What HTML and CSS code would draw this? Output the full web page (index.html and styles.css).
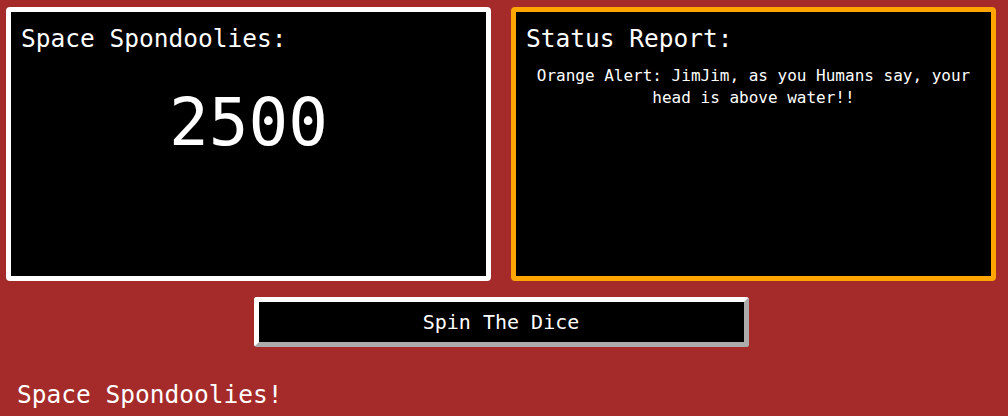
FILE: index.html
```html
<!DOCTYPE html>
<html lang="en">
<head>
<meta charset="utf-8">
<title>Space Spondoolies</title>
<link rel="stylesheet" href="styles.css">
</head>
<body>
<main class="app">
  <section class="cards">
    <div class="card card-score">
      <h2 class="card-title">Space Spondoolies:</h2>
      <div class="score">2500</div>
    </div>
    <div class="card card-status">
      <h2 class="card-title">Status Report:</h2>
      <p class="status-msg">Orange Alert: JimJim, as you Humans say, your head is above water!!</p>
    </div>
  </section>
  <button class="spin-btn" type="button">Spin The Dice</button>
  <footer class="footer">Space Spondoolies!</footer>
</main>
</body>
</html>
```

FILE: styles.css
```css
* { box-sizing: border-box; }

html, body {
  margin: 0;
  padding: 0;
  background: #a52a2a;
}

body {
  font-family: "DejaVu Sans Mono", "Liberation Mono", monospace;
  color: #fff;
}

.app {
  display: flex;
  flex-direction: column;
  padding: 7px 12px 0 6px;
}

.cards {
  display: flex;
  gap: 20px;
}

.card {
  width: 485px;
  height: 274px;
  background: #000;
  border: 5px solid #fff;
  border-radius: 4px;
  padding: 12px 10px 0 10px;
}

.card-status {
  border-color: #ffa500;
}

.card-title {
  margin: 0;
  font-size: 24.5px;
  font-weight: normal;
  line-height: 30px;
}

.score {
  margin-top: 29px;
  font-size: 66px;
  line-height: 80px;
  text-align: center;
}

.status-msg {
  margin: 11px 0 0;
  font-size: 16px;
  line-height: 22px;
  text-align: center;
}

.spin-btn {
  align-self: center;
  margin-top: 16px;
  width: 495px;
  height: 50px;
  background: #000;
  color: #fff;
  border: 5px outset #fff;
  border-radius: 3px;
  font-family: "DejaVu Sans Mono", "Liberation Mono", monospace;
  font-size: 20px;
  padding: 0;
}

.footer {
  margin-top: 33px;
  padding-left: 11px;
  font-size: 24.5px;
  line-height: 30px;
}
```
